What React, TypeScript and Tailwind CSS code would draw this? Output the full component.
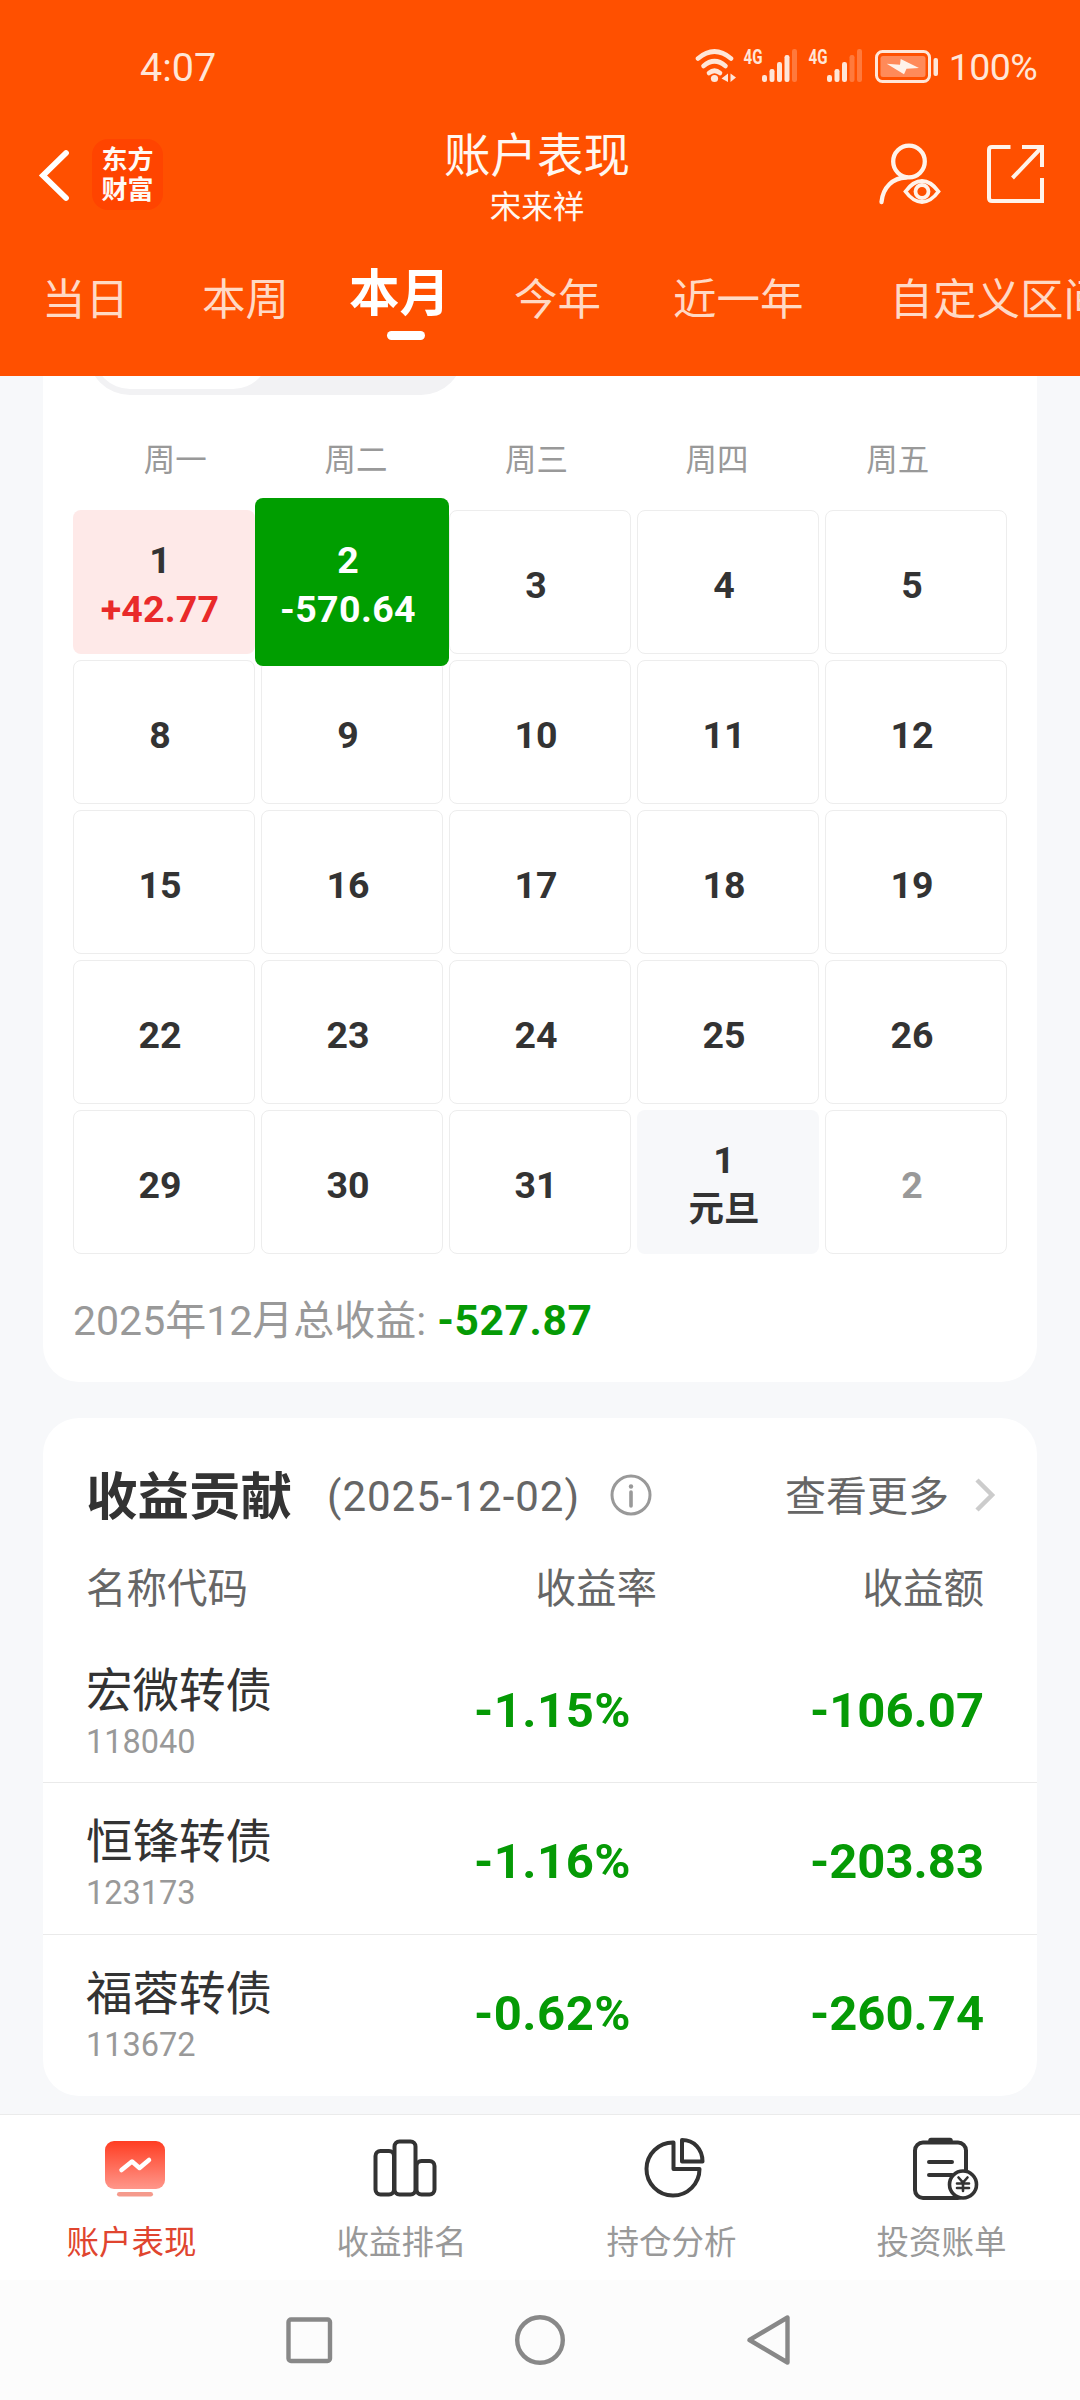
import React from "react";

const fontStack = "font-['Roboto','Noto_Sans_CJK_SC',sans-serif]";

function StatusBar() {
  const bars = [7, 13, 20, 27, 33];
  const signal = (x: number, full: number) =>
    bars.map((h, i) => (
      <rect
        key={i}
        x={x + i * 7.5}
        y={81 - h}
        width="5"
        height={h}
        rx="2.2"
        fill="#ffe6d8"
        opacity={i < full ? 1 : 0.28}
      />
    ));
  return (
    <div className="flex h-[125px] items-start justify-between pt-[42px] pl-[140px] pr-[43px]">
      <span className="text-[39.5px] leading-[51px] text-[#ffe6d8]">4:07</span>
      <div className="flex items-center">
        <svg width="250" height="50" viewBox="692 42 250 50" fill="none">
          <g stroke="#ffe6d8" strokeWidth="4.6" strokeLinecap="round">
            <path d="M698 57.5Q714.5 43.500 731 57.5" />
            <path d="M703.500 65Q714.5 55.500 725.500 65" />
            <path d="M709 72Q714.500 67.500 720 72" />
          </g>
          <circle cx="714.500" cy="77.500" r="3.600" fill="#ffe6d8" />
          <path d="M728 72.500V81L721.500 77.500ZM730.500 72.500V81L736 76.500Z" fill="#ffe6d8" />
          <text x="743.500" y="63" fontSize="21" fontWeight="700" fontFamily="Roboto" fill="#ffe6d8" textLength="19" lengthAdjust="spacingAndGlyphs">4G</text>
          {signal(762, 4)}
          <text x="808.500" y="63" fontSize="21" fontWeight="700" fontFamily="Roboto" fill="#ffe6d8" textLength="19" lengthAdjust="spacingAndGlyphs">4G</text>
          {signal(827, 3)}
          <rect x="876.500" y="50.500" width="53" height="30" rx="6" stroke="#ffe6d8" strokeWidth="3" />
          <rect x="880.500" y="55" width="45" height="21" rx="2.500" fill="#ff8a59" />
          <path d="M886.700 62.700L900 63.800L900.700 58L919 67L906.500 67.700L904 73.300Z" fill="#fff3ea" />
          <rect x="933.500" y="57" width="4.500" height="18" rx="2" fill="#ffe6d8" />
        </svg>
        <span className="ml-[7px] text-[37.5px] leading-[51px] text-[#ffe6d8] tracking-[-0.6px]">100%</span>
      </div>
    </div>
  );
}

function TitleBar() {
  return (
    <div className="grid h-[106px] grid-cols-[1fr_auto_1fr] items-start">
      <div className="flex items-center pt-[14px] pl-[38px]">
        <svg width="34" height="56" viewBox="38 147 34 56" fill="none">
          <path d="M66 153L43 175.500L66 198" stroke="#fff" strokeWidth="5.800" strokeLinecap="round" />
        </svg>
        <div className="ml-5 flex h-[71px] w-[71px] flex-col items-center rounded-[16px] bg-[#ff4400] pt-[6px] text-[26px] leading-[30px] font-bold text-[#fffaf5]">
          <span>东方</span>
          <span>财富</span>
        </div>
      </div>
      <div className="mr-[6px] flex flex-col items-center pt-[3px] text-[#fff7f0]">
        <h1 className="text-[46.5px] leading-[56px]">账户表现</h1>
        <span className="text-[31.5px] leading-[48px]">宋来祥</span>
      </div>
      <div className="flex justify-end pt-[15px] pr-[32px]">
        <svg width="66" height="68" viewBox="877 140 66 68" fill="none" stroke="#fff3ea" strokeWidth="4.300" strokeLinecap="round">
          <circle cx="909" cy="161.500" r="15.800" />
          <path d="M881.500 202C883 187 893 178 906 177.500" />
          <path d="M905.500 191.500C911 184 916 181 922 181S933 184 938.500 191.500C933 199 928 202 922 202S911 199 905.500 191.500Z" strokeWidth="3.800" />
          <circle cx="922" cy="191.500" r="6.500" strokeWidth="3.800" />
        </svg>
        <svg className="ml-[40px]" width="65" height="68" viewBox="983 140 65 68" fill="none" stroke="#fff3ea" strokeWidth="4">
          <path d="M1010.500 147H992Q989 147 989 150V198Q989 201 992 201H1042V178" />
          <path d="M1022 147H1042V167M1042 147L1012.500 178" />
        </svg>
      </div>
    </div>
  );
}

function PeriodTabs() {
  return (
    <div className="flex h-[145px] items-start pt-[40px] pl-[42px] text-[43.5px] leading-[60px] whitespace-nowrap text-[#ffd9c5]">
      <span>当日</span>
      <span className="ml-[73px]">本周</span>
      <div className="-mt-[7px] ml-[60px] flex w-[101px] flex-col items-center text-[50.5px] leading-[60px] font-bold text-white">
        <span>本月</span>
        <span className="mt-[7px] ml-[12px] h-[9px] w-[38px] rounded-full bg-white" />
      </div>
      <span className="ml-[64px]">今年</span>
      <span className="ml-[72px]">近一年</span>
      <span className="ml-[86px]">自定义区间</span>
    </div>
  );
}

type Day = { day: string; note?: string; kind?: "gain" | "loss" | "holiday" | "muted" };

const days: Day[] = [
  { day: "1", note: "+42.77", kind: "gain" },
  { day: "2", note: "-570.64", kind: "loss" },
  ...["3", "4", "5", "8", "9", "10", "11", "12", "15", "16", "17", "18", "19", "22", "23", "24", "25", "26", "29", "30", "31"].map((day) => ({ day })),
  { day: "1", note: "元旦", kind: "holiday" },
  { day: "2", kind: "muted" },
];

const cellStyle = {
  gain: "bg-[#fee9e8] pt-[5px] text-[#333]",
  loss: "relative z-10 -mx-[6px] -my-[12px] bg-[#009e00] pt-[5px] text-white",
  holiday: "bg-[#f7f8fa] pt-[5px] text-[#333]",
  muted: "border border-[#ededed] pt-[7px] text-[#999]",
  plain: "border border-[#ededed] pt-[7px] text-[#333]",
};

function Calendar() {
  return (
    <section className="h-[1006px] rounded-b-[36px] bg-white">
      <div className="-mt-[65px] ml-[45px] flex h-[84px] w-[375px] rounded-full bg-[#f2f2f4] p-[6px]">
        <div className="w-[175px] rounded-full bg-white" />
      </div>
      <div className="mt-[42px] ml-[42px] grid w-[903px] grid-cols-5 text-center text-[31.5px] leading-[48px] text-[#999]">
        {["周一", "周二", "周三", "周四", "周五"].map((d) => (
          <span key={d}>{d}</span>
        ))}
      </div>
      <div className="mt-[25px] ml-[30px] grid w-[934px] auto-rows-[144px] grid-cols-5 gap-[6px] text-[37.5px] leading-[49px] font-bold">
        {days.map((d, i) => (
          <div key={i} className={`flex flex-col items-center justify-center rounded-[8px] pr-[8px] ${cellStyle[d.kind ?? "plain"]}`}>
            <span>{d.day}</span>
            {d.kind === "holiday" ? (
              <span className="text-[35.5px]">{d.note}</span>
            ) : (
              d.note && (
                <span className={d.kind === "gain" ? "tracking-[0.2px] text-[#e92a2a]" : "tracking-[0.4px]"}>{d.note}</span>
              )
            )}
          </div>
        ))}
      </div>
      <div className="mt-[37px] ml-[30px] flex text-[41px] leading-[60px] text-[#999]">
        <span>2025年12月总收益:</span>
        <span className="ml-[11px] text-[42.5px] font-bold tracking-[0.6px] text-[#059a05]">-527.87</span>
      </div>
    </section>
  );
}

const holdings = [
  { name: "宏微转债", code: "118040", rate: "-1.15%", amount: "-106.07" },
  { name: "恒锋转债", code: "123173", rate: "-1.16%", amount: "-203.83" },
  { name: "福蓉转债", code: "113672", rate: "-0.62%", amount: "-260.74" },
];

function Contribution() {
  return (
    <section className="mt-[36px] h-[678px] rounded-[36px] bg-white">
      <div className="flex h-[140px] items-center pt-[17px] pr-[38px] pl-[43px] text-[#666]">
        <h2 className="pt-[2px] text-[51.5px] leading-[60px] font-bold text-[#333]">收益贡献</h2>
        <span className="ml-[35px] text-[42px] leading-[60px] tracking-[1px]">(2025-12-02)</span>
        <svg className="mb-[3px] ml-[29px]" width="44" height="44" viewBox="0 0 44 44" fill="none" stroke="#999">
          <circle cx="22" cy="22" r="19" strokeWidth="3" />
          <path d="M22 19V33" strokeWidth="3.600" strokeLinecap="round" />
          <circle cx="22" cy="13.500" r="2.200" fill="#999" stroke="none" />
        </svg>
        <span className="ml-auto text-[41px] leading-[60px]">查看更多</span>
        <svg className="mb-[3px] ml-[24px]" width="26" height="40" viewBox="0 0 26 40" fill="none">
          <path d="M4 5L19 20L4 35" stroke="#ccc" strokeWidth="4.500" />
        </svg>
      </div>
      <div className="grid h-[74px] grid-cols-[1fr_250px_327px] pt-px pr-[53px] pl-[43px] text-[40.5px] leading-[60px] text-[#666]">
        <span>名称代码</span>
        <span className="text-right">收益率</span>
        <span className="text-right">收益额</span>
      </div>
      {holdings.map((h, i) => (
        <div
          key={h.code}
          className={`grid grid-cols-[1fr_250px_353px] border-b border-[#eaeaea] pr-[53px] pl-[43px] last:border-0 ${i === 1 ? "h-[152px]" : "h-[151px]"}`}
        >
          <div className="flex flex-col pt-[31px]">
            <span className="text-[46.5px] leading-[56px] text-[#333]">{h.name}</span>
            <span className="text-[32.5px] leading-[46px] text-[#999]">{h.code}</span>
          </div>
          <span className="pt-[49px] text-right text-[49px] leading-[60px] font-bold tracking-[0.5px] text-[#059a05]">{h.rate}</span>
          <span className="pt-[49px] text-right text-[49px] leading-[60px] font-bold text-[#059a05]">{h.amount}</span>
        </div>
      ))}
    </section>
  );
}

function BottomTabs() {
  const icons = [
    <svg key="a" width="70" height="70" viewBox="100 2134 70 70" fill="none">
      <defs>
        <linearGradient id="screen" x1="0" y1="0" x2="0" y2="1">
          <stop offset="0" stopColor="#ff3d22" />
          <stop offset="1" stopColor="#ff978b" />
        </linearGradient>
      </defs>
      <rect x="105" y="2141" width="60" height="48" rx="9" fill="url(#screen)" />
      <path d="M121.500 2170L132 2161.500L139.500 2168L149 2160" stroke="#fff" strokeWidth="4.500" strokeLinecap="round" strokeLinejoin="round" />
      <rect x="117" y="2192" width="36" height="4.600" rx="2.300" fill="#f59a8c" />
    </svg>,
    <svg key="b" width="70" height="70" viewBox="370 2134 70 70" fill="none" stroke="#333" strokeWidth="4">
      <rect x="375.500" y="2151" width="18.500" height="43.500" rx="5" />
      <rect x="394.500" y="2141.500" width="21" height="53" rx="5" />
      <rect x="416.500" y="2161" width="18" height="33.500" rx="5" />
    </svg>,
    <svg key="c" width="70" height="70" viewBox="640 2134 70 70" fill="none" stroke="#333" strokeWidth="4" strokeLinejoin="round">
      <path d="M673.500 2142.500V2169H699.500A26.500 26.500 0 1 1 673.500 2142.500Z" />
      <path d="M682 2140V2161.500H702.500C702.500 2149 694 2140 682 2140Z" />
    </svg>,
    <svg key="d" width="74" height="70" viewBox="908 2134 74 70" fill="none" stroke="#333" strokeWidth="4" strokeLinecap="round">
      <rect x="915" y="2142.500" width="51" height="55.500" rx="8" />
      <path d="M931 2140.500H950" strokeWidth="5.500" />
      <path d="M929 2162H952M929 2175H952" />
      <circle cx="963" cy="2184.500" r="13.500" fill="#fff" strokeWidth="3.600" />
      <path d="M958.500 2177.500L963 2182.500L967.500 2177.500M963 2182.500V2191M957 2183.500H969M957 2188H969" strokeWidth="2.600" />
    </svg>,
  ];
  return (
    <nav className="grid h-[166px] grid-cols-4 border-t border-[#ebebeb] bg-white">
      {["账户表现", "收益排名", "持仓分析", "投资账单"].map((label, i) => (
        <div key={label} className="flex flex-col items-center pt-[19px]">
          {icons[i]}
          <span className={`mt-[17px] mr-[7px] text-[32.5px] leading-[44px] ${i === 0 ? "text-[#e0452f]" : "text-[#999]"}`}>{label}</span>
        </div>
      ))}
    </nav>
  );
}

function SystemNav() {
  return (
    <div className="flex h-[120px] items-center justify-center gap-[171px] bg-[#fcfcfc]">
      <svg width="60" height="60" viewBox="0 0 60 60" fill="none" stroke="#888" strokeWidth="4.400">
        <rect x="9.500" y="9.500" width="41.500" height="41.500" rx="2.500" />
      </svg>
      <svg width="60" height="60" viewBox="0 0 60 60" fill="none" stroke="#888" strokeWidth="4.400">
        <circle cx="30" cy="30" r="22.800" />
      </svg>
      <svg width="60" height="60" viewBox="0 0 60 60" fill="none" stroke="#888" strokeWidth="4.400" strokeLinejoin="round">
        <path d="M46.500 7.500V52.500L8.500 30Z" />
      </svg>
    </div>
  );
}

export default function App() {
  return (
    <div className={`flex h-[2400px] w-[1080px] flex-col overflow-hidden bg-[#f7f8fa] ${fontStack}`}>
      <header className="h-[376px] shrink-0 overflow-hidden bg-[#ff5000]">
        <StatusBar />
        <TitleBar />
        <PeriodTabs />
      </header>
      <main className="flex h-[1738px] shrink-0 flex-col overflow-hidden px-[43px]">
        <Calendar />
        <Contribution />
      </main>
      <BottomTabs />
      <SystemNav />
    </div>
  );
}
